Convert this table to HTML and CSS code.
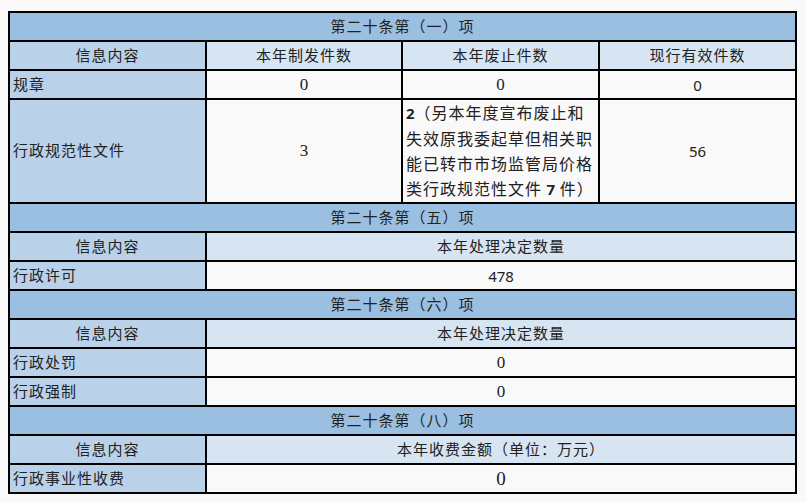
FILE: index.html
```html
<!DOCTYPE html>
<html lang="zh-CN">
<head>
<meta charset="utf-8">
<link rel="stylesheet" href="styles.css">
</head>
<body>
<table class="report">
  <colgroup>
    <col class="c1"><col class="c2"><col class="c3"><col class="c4">
  </colgroup>
  <tr class="sec"><td colspan="4">第二十条第（一）项</td></tr>
  <tr class="head">
    <td class="lab">信息内容</td><td>本年制发件数</td><td>本年废止件数</td><td>现行有效件数</td>
  </tr>
  <tr>
    <td class="lab left">规章</td><td class="num">0</td><td class="num">0</td><td class="sans">0</td>
  </tr>
  <tr class="tall">
    <td class="lab left">行政规范性文件</td>
    <td class="num">3</td>
    <td class="note"><b>2</b>（另本年度宣布废止和失效原我委起草但相关职能已转市市场监管局价格类行政规范性文件 <b>7</b> 件）</td>
    <td class="sans">56</td>
  </tr>
  <tr class="sec"><td colspan="4">第二十条第（五）项</td></tr>
  <tr class="head">
    <td class="lab">信息内容</td><td colspan="3">本年处理决定数量</td>
  </tr>
  <tr>
    <td class="lab left">行政许可</td><td colspan="3" class="sans">478</td>
  </tr>
  <tr class="sec"><td colspan="4">第二十条第（六）项</td></tr>
  <tr class="head">
    <td class="lab">信息内容</td><td colspan="3">本年处理决定数量</td>
  </tr>
  <tr>
    <td class="lab left">行政处罚</td><td colspan="3" class="num">0</td>
  </tr>
  <tr>
    <td class="lab left">行政强制</td><td colspan="3" class="num">0</td>
  </tr>
  <tr class="sec"><td colspan="4">第二十条第（八）项</td></tr>
  <tr class="head">
    <td class="lab">信息内容</td><td colspan="3">本年收费金额（单位：万元）</td>
  </tr>
  <tr>
    <td class="lab left">行政事业性收费</td><td colspan="3" class="num big">0</td>
  </tr>
</table>
</body>
</html>
```
FILE: styles.css
```css
html, body {
  background: #f9f9f9;
}
body {
  margin: 11px 8px;
  font-family: "Liberation Serif", "Noto Sans CJK SC", serif;
  color: #222;
}
.report {
  border-collapse: collapse;
  table-layout: fixed;
  width: 789px;
}
.c1 { width: 197px; }
.c2 { width: 196px; }
.c3 { width: 197px; }
.c4 { width: 197px; }
.report td {
  border: 2px solid #000;
  height: 29px;
  padding: 0 3px;
  text-align: center;
  vertical-align: middle;
  font-size: 15px;
  letter-spacing: 1px;
  line-height: 20px;
  background: #f9f9f9;
  box-sizing: border-box;
}
.report .sec td {
  background: #9bbfe1;
}
.report .head td {
  background: #d7e4f1;
}
.report td.lab {
  background: #b9d1e9;
}
.report td.left {
  text-align: left;
}
.report td.num {
  font-size: 17px;
  letter-spacing: 0;
}
.report td.sans {
  font-family: "Noto Sans", "Noto Sans CJK SC", sans-serif;
  font-size: 15px;
  letter-spacing: 0;
}
.report td.note {
  font-family: "Noto Sans CJK SC", sans-serif;
  font-size: 16px;
  letter-spacing: 1px;
  line-height: 25px;
  padding: 0 3px;
  text-align: left;
}
.report td.note b {
  font-family: "Noto Sans", sans-serif;
  font-size: 15px;
  font-weight: 700;
  letter-spacing: 0;
}
.report .tall td {
  height: 102px;
}
.report td.big {
  font-size: 19px;
}
```
